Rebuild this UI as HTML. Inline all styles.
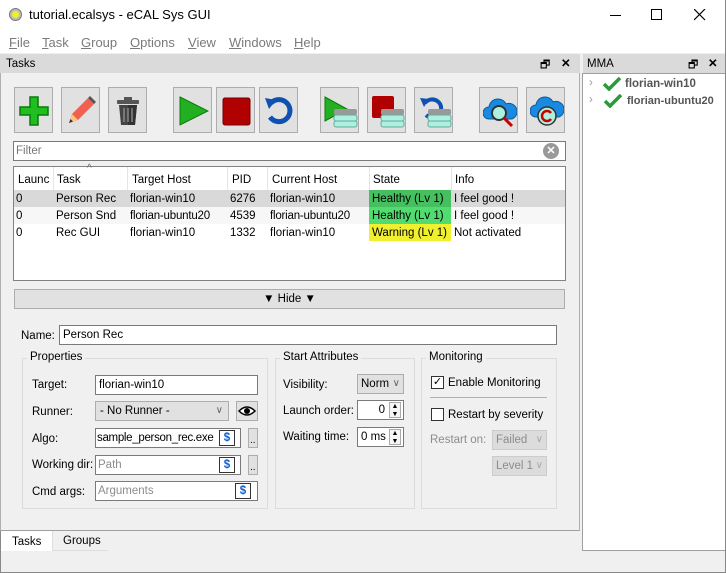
<!DOCTYPE html>
<html><head><meta charset="utf-8"><style>
*{box-sizing:border-box;margin:0;padding:0;white-space:nowrap}
body{width:726px;height:573px;background:#f0f0f0;font-family:"Liberation Sans",sans-serif;font-size:11.5px;color:#000;position:relative;overflow:hidden}
.a{position:absolute}
.btn{position:absolute;top:87px;width:39px;height:46px;background:#e1e1e1;border:1px solid #adadad}
.btn svg{position:absolute;left:3px;top:7px}
.in{position:absolute;background:#fff;border:1px solid #7a7a7a;height:20px;padding:3px 3px 0;overflow:hidden}
.cb{position:absolute;background:#e1e1e1;border:1px solid #adadad;height:20px;padding:3px 4px 0;overflow:hidden}
.lbl{position:absolute}
.gb{position:absolute;border:1px solid #dcdcdc}
.gt{position:absolute;background:#f0f0f0;padding:0 3px}
.td{position:absolute;height:17px;line-height:19px;padding-left:3px}
.gray{color:#8c8c8c}
.chev{position:absolute;right:5px;top:3px;color:#666;font-size:10px}
</style></head><body>
<div class="a" style="left:0;top:0;width:726px;height:53px;background:#fff"></div>
<div class="a" style="left:9px;top:8px;width:13px;height:13px;border-radius:50%;background:#bbb;border:1px solid #777"><div class="a" style="left:2px;top:2px;width:7px;height:7px;border-radius:50%;background:#f0f020"></div></div>
<div class="a" style="left:29px;top:7px;font-size:13px">tutorial.ecalsys - eCAL Sys GUI</div>
<div class="a" style="left:610px;top:15px;width:11px;height:1px;background:#000"></div>
<div class="a" style="left:651px;top:9px;width:11px;height:11px;border:1px solid #000"></div>
<svg class="a" style="left:694px;top:9px" width="12" height="12"><path d="M0 0L11 11M11 0L0 11" stroke="#000" stroke-width="1.2"/></svg>
<div class="a" style="left:9px;top:35px;font-size:13px;color:#7a7a7a">
<span style="position:absolute;left:0"><u>F</u>ile</span><span style="position:absolute;left:33px"><u>T</u>ask</span><span style="position:absolute;left:72px"><u>G</u>roup</span><span style="position:absolute;left:121px"><u>O</u>ptions</span><span style="position:absolute;left:179px"><u>V</u>iew</span><span style="position:absolute;left:220px"><u>W</u>indows</span><span style="position:absolute;left:285px"><u>H</u>elp</span></div>
<div class="a" style="left:0;top:54px;width:580px;height:19px;background:#dadada"></div>
<div class="a" style="left:6px;top:58px">Tasks</div>
<div class="a" style="left:540px;top:56px;font-size:11px">🗗</div>
<div class="a" style="left:561px;top:56px;font-weight:bold">✕</div>
<div class="a" style="left:0;top:73px;width:580px;height:458px;border-left:1px solid #b0b0b0;border-right:1px solid #b0b0b0;border-bottom:1px solid #a0a0a0"></div>
<div class="a" style="left:583px;top:54px;width:143px;height:19px;background:#dadada"></div>
<div class="a" style="left:587px;top:58px">MMA</div>
<div class="a" style="left:688px;top:56px;font-size:11px">🗗</div>
<div class="a" style="left:708px;top:56px;font-weight:bold">✕</div>
<div class="a" style="left:582px;top:73px;width:144px;height:478px;background:#fff;border:1px solid #a0a0a0"></div>
<div class="a" style="left:589px;top:77px;color:#999">›</div>
<div class="a" style="left:589px;top:94px;color:#999">›</div>
<svg class="a" style="left:602px;top:77px" width="20" height="14"><path d="M2 7l5 5 11-11" stroke="#2a9a3a" stroke-width="3.5" fill="none"/></svg>
<svg class="a" style="left:603px;top:94px" width="20" height="14"><path d="M2 7l5 5 11-11" stroke="#2a9a3a" stroke-width="3.5" fill="none"/></svg>
<div class="a" style="left:625px;top:78px;font-weight:bold;color:#555">florian-win10</div>
<div class="a" style="left:627px;top:95px;font-weight:bold;color:#555;font-size:11px">florian-ubuntu20</div>
<div class="btn" style="left:14px"><svg width="32" height="32"><path d="M12 2h8v10h10v8H20v10h-8V20H2v-8h10z" fill="#1fbf1f" stroke="#0a7a0a" stroke-width="1.5"/></svg></div>
<div class="btn" style="left:61px"><svg width="32" height="32"><path d="M4 28l3-9 16-16 6 6-16 16z" fill="#f06050"/><path d="M4 28l3-9 6 6z" fill="#f5c880"/><path d="M4 28l1.5-4 2.5 2.5z" fill="#333"/><path d="M23 3l6 6 2-2-6-6z" fill="#555"/></svg></div>
<div class="btn" style="left:108px"><svg width="32" height="32"><rect x="5" y="5" width="22" height="4" rx="1" fill="#555"/><rect x="12" y="2" width="8" height="3" fill="#555"/><path d="M7 10h18l-2 20H9z" fill="#444"/><path d="M16 10h9l-2 20h-7z" fill="#333"/><path d="M12 13v14M16 13v14M20 13v14" stroke="#888" stroke-width="1.5"/></svg></div>
<div class="btn" style="left:173px"><svg width="32" height="32"><path d="M3 2l28 14-28 14z" fill="#22b022" stroke="#0a7a0a"/></svg></div>
<div class="btn" style="left:216px"><svg width="32" height="32"><rect x="3" y="3" width="27" height="27" rx="2" fill="#b00000" stroke="#700"/></svg></div>
<div class="btn" style="left:259px"><svg width="32" height="32"><path d="M8 8a11 11 0 1 1-1 14" stroke="#1050b0" stroke-width="5" fill="none"/><path d="M2 3l11 2-7 9z" fill="#1050b0"/></svg></div>
<div class="btn" style="left:320px"><svg width="34" height="34"><path d="M1 2l22 12-22 12z" fill="#22b022" stroke="#0a7a0a"/><rect x="10" y="14" width="23" height="6" rx="2" fill="#999"/><rect x="10" y="20" width="23" height="6" rx="2" fill="#aef0e0" stroke="#6a9"/><rect x="10" y="26" width="23" height="6" rx="2" fill="#aef0e0" stroke="#6a9"/></svg></div>
<div class="btn" style="left:367px"><svg width="34" height="34"><rect x="1" y="1" width="22" height="22" rx="2" fill="#b00000"/><rect x="10" y="14" width="23" height="6" rx="2" fill="#999"/><rect x="10" y="20" width="23" height="6" rx="2" fill="#aef0e0" stroke="#6a9"/><rect x="10" y="26" width="23" height="6" rx="2" fill="#aef0e0" stroke="#6a9"/></svg></div>
<div class="btn" style="left:414px"><svg width="34" height="34"><path d="M7 8a9 9 0 1 1 1 12" stroke="#1050b0" stroke-width="4" fill="none"/><path d="M2 3l9 1-5 8z" fill="#1050b0"/><rect x="10" y="14" width="23" height="6" rx="2" fill="#999"/><rect x="10" y="20" width="23" height="6" rx="2" fill="#aef0e0" stroke="#6a9"/><rect x="10" y="26" width="23" height="6" rx="2" fill="#aef0e0" stroke="#6a9"/></svg></div>
<div class="btn" style="left:479px"><svg width="34" height="34"><path d="M6 24a6 6 0 0 1 0-12 9 9 0 0 1 17-3 7 7 0 0 1 6 15z" fill="#1a8ae0" stroke="#0a5aa0"/><circle cx="16" cy="18" r="7" fill="#aef0e0" stroke="#333" stroke-width="2"/><path d="M21 23l8 8" stroke="#c00" stroke-width="3"/></svg></div>
<div class="btn" style="left:526px"><svg width="34" height="34"><path d="M6 22a6 6 0 0 1 0-12 9 9 0 0 1 17-3 7 7 0 0 1 6 15z" fill="#1a8ae0" stroke="#0a5aa0"/><circle cx="17" cy="21" r="9" fill="#aef0e0" stroke="#333" stroke-width="1.5"/><path d="M21 18a5 5 0 1 0 0 6" stroke="#c00" stroke-width="2.5" fill="none"/></svg></div>
<div class="in" style="left:13px;top:141px;width:553px;height:20px;color:#777;padding:3px 2px 0">Filter</div>
<div class="a" style="left:543px;top:143px;width:16px;height:16px;border-radius:50%;background:#999;color:#fff;font-size:11px;font-weight:bold;text-align:center;line-height:16px">✕</div>
<div class="a" style="left:13px;top:166px;width:553px;height:115px;background:#fff;border:1px solid #828282"></div>
<div class="a" style="left:53px;top:167px;width:1px;height:23px;background:#e5e5e5"></div>
<div class="a" style="left:127px;top:167px;width:1px;height:23px;background:#e5e5e5"></div>
<div class="a" style="left:227px;top:167px;width:1px;height:23px;background:#e5e5e5"></div>
<div class="a" style="left:267px;top:167px;width:1px;height:23px;background:#e5e5e5"></div>
<div class="a" style="left:369px;top:167px;width:1px;height:23px;background:#e5e5e5"></div>
<div class="a" style="left:451px;top:167px;width:1px;height:23px;background:#e5e5e5"></div>
<div class="a" style="left:87px;top:163px;font-size:10px;color:#666">^</div>
<div class="td" style="left:15px;top:171px">Launc</div><div class="td" style="left:54px;top:171px">Task</div><div class="td" style="left:129px;top:171px">Target Host</div><div class="td" style="left:229px;top:171px">PID</div><div class="td" style="left:269px;top:171px">Current Host</div><div class="td" style="left:370px;top:171px">State</div><div class="td" style="left:452px;top:171px">Info</div>
<div class="a" style="left:14px;top:190px;width:551px;height:17px;background:#d9d9d9"></div>
<div class="a" style="left:14px;top:207px;width:551px;height:17px;background:#f7f7f7"></div>
<div class="a" style="left:369px;top:190px;width:82px;height:17px;background:#45bf5f"></div>
<div class="a" style="left:369px;top:207px;width:82px;height:17px;background:#50dc6e"></div>
<div class="a" style="left:369px;top:224px;width:82px;height:17px;background:#f0f030"></div>
<div class="td" style="left:13px;top:190px">0</div><div class="td" style="left:53px;top:190px">Person Rec</div><div class="td" style="left:127px;top:190px">florian-win10</div><div class="td" style="left:227px;top:190px">6276</div><div class="td" style="left:267px;top:190px">florian-win10</div><div class="td" style="left:369px;top:190px">Healthy (Lv 1)</div><div class="td" style="left:451px;top:190px">I feel good !</div>
<div class="td" style="left:13px;top:207px">0</div><div class="td" style="left:53px;top:207px">Person Snd</div><div class="td" style="left:127px;top:207px;letter-spacing:-0.2px">florian-ubuntu20</div><div class="td" style="left:227px;top:207px">4539</div><div class="td" style="left:267px;top:207px;letter-spacing:-0.2px">florian-ubuntu20</div><div class="td" style="left:369px;top:207px">Healthy (Lv 1)</div><div class="td" style="left:451px;top:207px">I feel good !</div>
<div class="td" style="left:13px;top:224px">0</div><div class="td" style="left:53px;top:224px">Rec GUI</div><div class="td" style="left:127px;top:224px">florian-win10</div><div class="td" style="left:227px;top:224px">1332</div><div class="td" style="left:267px;top:224px">florian-win10</div><div class="td" style="left:369px;top:224px">Warning (Lv 1)</div><div class="td" style="left:451px;top:224px">Not activated</div>
<div class="a" style="left:14px;top:289px;width:551px;height:20px;background:#e1e1e1;border:1px solid #adadad;text-align:center;line-height:19px">▼ Hide ▼</div>
<div class="lbl" style="left:21px;top:330px">Name:</div>
<div class="in" style="left:59px;top:325px;width:498px">Person Rec</div>
<div class="gb" style="left:22px;top:358px;width:246px;height:151px"></div><div class="gt" style="left:27px;top:351px">Properties</div>
<div class="gb" style="left:275px;top:358px;width:140px;height:151px"></div><div class="gt" style="left:280px;top:351px">Start Attributes</div>
<div class="gb" style="left:421px;top:358px;width:136px;height:151px"></div><div class="gt" style="left:426px;top:351px">Monitoring</div>
<div class="lbl" style="left:32px;top:379px">Target:</div>
<div class="in" style="left:95px;top:375px;width:163px">florian-win10</div>
<div class="lbl" style="left:32px;top:406px">Runner:</div>
<div class="cb" style="left:95px;top:401px;width:134px">- No Runner -<span class="chev">∨</span></div>
<div class="cb" style="left:236px;top:401px;width:22px;padding:0;text-align:center">
<svg width="20" height="18"><path d="M2 9q8-8 16 0q-8 8-16 0z" fill="#fff" stroke="#000" stroke-width="1.5"/><circle cx="10" cy="9" r="3" fill="#000"/></svg></div>
<div class="lbl" style="left:32px;top:433px">Algo:</div>
<div class="in" style="left:95px;top:428px;width:146px;padding-left:1px;letter-spacing:-0.3px">sample_person_rec.exe</div>
<div class="lbl" style="left:32px;top:459px">Working dir:</div>
<div class="in gray" style="left:95px;top:455px;width:146px;padding-left:2px">Path</div>
<div class="lbl" style="left:32px;top:486px">Cmd args:</div>
<div class="in gray" style="left:95px;top:481px;width:163px;padding-left:2px">Arguments</div>
<div class="a" style="left:219px;top:430px;width:16px;height:16px;border:1px solid #333;color:#1060d0;font-weight:bold;text-align:center;line-height:14px;background:#fff">$</div>
<div class="a" style="left:219px;top:457px;width:16px;height:16px;border:1px solid #333;color:#1060d0;font-weight:bold;text-align:center;line-height:14px;background:#fff">$</div>
<div class="a" style="left:235px;top:483px;width:16px;height:16px;border:1px solid #333;color:#1060d0;font-weight:bold;text-align:center;line-height:14px;background:#fff">$</div>
<div class="cb" style="left:248px;top:428px;width:10px;height:20px;padding:0 1px;font-size:10px;line-height:24px">..</div>
<div class="cb" style="left:248px;top:455px;width:10px;height:20px;padding:0 1px;font-size:10px;line-height:24px">..</div>
<div class="lbl" style="left:283px;top:379px">Visibility:</div>
<div class="cb" style="left:357px;top:374px;width:47px;padding-left:3px">Norm<span class="chev" style="right:3px">∨</span></div>
<div class="lbl" style="left:283px;top:405px">Launch order:</div>
<div class="in" style="left:357px;top:400px;width:47px;text-align:right;padding-right:18px">0</div>
<div class="lbl" style="left:283px;top:431px">Waiting time:</div>
<div class="in" style="left:357px;top:427px;width:47px">0 ms</div>
<div class="a" style="left:389px;top:402px;width:12px;height:16px;font-size:7px;line-height:8px;text-align:center;border:1px solid #aaa;background:#f5f5f5;white-space:normal">▲<br>▼</div>
<div class="a" style="left:389px;top:429px;width:12px;height:16px;font-size:7px;line-height:8px;text-align:center;border:1px solid #aaa;background:#f5f5f5;white-space:normal">▲<br>▼</div>
<div class="a" style="left:431px;top:376px;width:13px;height:13px;border:1px solid #333;background:#fff;font-size:11px;line-height:11px;text-align:center">✓</div>
<div class="lbl" style="left:448px;top:377px">Enable Monitoring</div>
<div class="a" style="left:430px;top:397px;width:117px;height:1px;background:#b0b0b0"></div>
<div class="a" style="left:431px;top:408px;width:13px;height:13px;border:1px solid #333;background:#fff"></div>
<div class="lbl" style="left:448px;top:409px">Restart by severity</div>
<div class="lbl gray" style="left:430px;top:434px">Restart on:</div>
<div class="cb gray" style="left:492px;top:430px;width:55px;background:#dcdcdc;border-color:#ccc;padding-left:3px">Failed<span class="chev" style="right:3px;color:#aaa">∨</span></div>
<div class="cb gray" style="left:492px;top:456px;width:55px;background:#dcdcdc;border-color:#ccc;padding-left:3px">Level 1<span class="chev" style="right:3px;color:#aaa;background:#dcdcdc">∨</span></div>
<div class="a" style="left:0;top:531px;width:580px;height:42px;background:#f0f0f0"></div>
<div class="a" style="left:1px;top:531px;width:52px;height:20px;background:#fff;border-right:1px solid #ddd"></div>
<div class="a" style="left:12px;top:536px">Tasks</div>
<div class="a" style="left:53px;top:550px;width:55px;height:1px;background:#ddd"></div>
<div class="a" style="left:63px;top:535px">Groups</div>
<div class="a" style="left:0;top:531px;width:1px;height:42px;background:#888"></div>
<div class="a" style="left:0;top:572px;width:726px;height:1px;background:#888"></div>
<div class="a" style="left:725px;top:0;width:1px;height:573px;background:#888"></div>
</body></html>
